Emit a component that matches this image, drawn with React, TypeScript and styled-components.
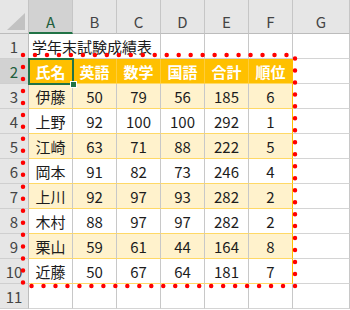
import React from 'react';
import styled, { createGlobalStyle } from 'styled-components';

const GlobalStyle = createGlobalStyle`
  html, body {
    margin: 0;
    padding: 0;
    background: #ffffff;
    overflow: hidden;
  }
  body {
    font-family: "Noto Sans CJK JP", "Noto Sans", sans-serif;
  }
`;

type Tone = 'head' | 'odd' | 'even' | 'plain';

const COLS = ['A', 'B', 'C', 'D', 'E', 'F', 'G'];

const header = ['氏名', '英語', '数学', '国語', '合計', '順位'];

const rows: (string | number)[][] = [
  ['伊藤', 50, 79, 56, 185, 6],
  ['上野', 92, 100, 100, 292, 1],
  ['江崎', 63, 71, 88, 222, 5],
  ['岡本', 91, 82, 73, 246, 4],
  ['上川', 92, 97, 93, 282, 2],
  ['木村', 88, 97, 97, 282, 2],
  ['栗山', 59, 61, 44, 164, 8],
  ['近藤', 50, 67, 64, 181, 7],
];

const Wrap = styled.div`
  position: relative;
  width: 350px;
  height: 310px;
  overflow: hidden;
`;

const Sheet = styled.div`
  display: grid;
  grid-template-columns: 29px repeat(6, 44px) 1fr;
  grid-template-rows: 34px repeat(11, 25px);
  width: 350px;
`;

const Corner = styled.div`
  position: relative;
  background: #e6e6e6;
  border-right: 1px solid #c4c4c4;
  border-bottom: 1px solid #bcbcbc;
  box-sizing: border-box;
  &::after {
    content: '';
    position: absolute;
    right: 3px;
    bottom: 3px;
    width: 18px;
    height: 17px;
    background: #c2c2c2;
    clip-path: polygon(100% 0, 100% 100%, 0 100%);
  }
`;

const ColHeader = styled.div<{ $selected?: boolean }>`
  box-sizing: border-box;
  display: flex;
  align-items: center;
  justify-content: center;
  padding-top: 10px;
  background: ${p => (p.$selected ? '#d2d2d2' : '#e6e6e6')};
  border-right: 1px solid #c6c6c6;
  border-bottom: ${p => (p.$selected ? '2px solid #217346' : '1px solid #bcbcbc')};
  color: ${p => (p.$selected ? '#1f5e3c' : '#444444')};
  font-size: 15px;
  line-height: 1;
`;

const RowHeader = styled.div<{ $selected?: boolean }>`
  box-sizing: border-box;
  display: flex;
  align-items: center;
  justify-content: center;
  background: ${p => (p.$selected ? '#d2d2d2' : '#e6e6e6')};
  border-right: 1px solid #bdbdbd;
  border-bottom: 1px solid #cfcfcf;
  color: ${p => (p.$selected ? '#1f5e3c' : '#444444')};
  font-size: 15px;
  line-height: 1;
`;

const toneBg: Record<Tone, string> = {
  head: '#ffc000',
  odd: '#fff2cc',
  even: '#ffffff',
  plain: '#ffffff',
};

const Cell = styled.div<{ $tone: Tone; $last?: boolean; $span?: number }>`
  box-sizing: border-box;
  display: flex;
  align-items: center;
  justify-content: ${p => (p.$tone === 'plain' ? 'flex-start' : 'center')};
  grid-column: ${p => (p.$span ? `span ${p.$span}` : 'auto')};
  background: ${p => toneBg[p.$tone]};
  border-right: 1px solid
    ${p => (p.$last ? '#ffc000' : p.$tone === 'head' ? '#ffcd3a' : '#c8c8c8')};
  border-bottom: 1px solid ${p => (p.$tone === 'plain' ? '#d4d4d4' : '#ffd966')};
  color: ${p => (p.$tone === 'head' ? '#ffffff' : '#1c1c1c')};
  font-weight: ${p => (p.$tone === 'head' ? 700 : 400)};
  font-size: 15px;
  line-height: 1;
  padding-left: ${p => (p.$tone === 'plain' ? '3px' : '0')};
  white-space: nowrap;
`;

const Selection = styled.div`
  position: absolute;
  left: 28px;
  top: 58px;
  width: 46px;
  height: 27px;
  box-sizing: border-box;
  border: 2px solid #217346;
  pointer-events: none;
`;

const FillHandle = styled.div`
  position: absolute;
  left: 70px;
  top: 81px;
  width: 7px;
  height: 7px;
  box-sizing: border-box;
  background: #217346;
  border: 1px solid #ffffff;
`;

const Ants = styled.svg`
  position: absolute;
  left: 0;
  top: 0;
  pointer-events: none;
`;

const App = () => {
  const perimeter = 2 * (272 + 231);
  const step = perimeter / 84;

  return (
    <>
      <GlobalStyle />
      <Wrap>
        <Sheet>
          <Corner />
          {COLS.map(c => (
            <ColHeader key={c} $selected={c === 'A'}>{c}</ColHeader>
          ))}

          <RowHeader>1</RowHeader>
          <Cell $tone="plain" $span={3}>学年末試験成績表</Cell>
          {[0, 1, 2, 3].map(i => <Cell key={i} $tone="plain" />)}

          <RowHeader $selected>2</RowHeader>
          {header.map((h, i) => (
            <Cell key={h} $tone="head" $last={i === 5}>{h}</Cell>
          ))}
          <Cell $tone="plain" />

          {rows.map((r, ri) => (
            <React.Fragment key={ri}>
              <RowHeader>{ri + 3}</RowHeader>
              {r.map((v, ci) => (
                <Cell key={ci} $tone={ri % 2 === 0 ? 'odd' : 'even'} $last={ci === 5}>
                  {v}
                </Cell>
              ))}
              <Cell $tone="plain" />
            </React.Fragment>
          ))}

          <RowHeader>11</RowHeader>
          {[0, 1, 2, 3, 4, 5, 6].map(i => <Cell key={i} $tone="plain" />)}
        </Sheet>

        <Selection />
        <FillHandle />

        <Ants width="350" height="310" viewBox="0 0 350 310">
          <rect
            x="23"
            y="55"
            width="272"
            height="231"
            fill="none"
            stroke="#ff0000"
            strokeWidth="4.5"
            strokeLinecap="round"
            strokeDasharray={`0 ${step}`}
          />
        </Ants>
      </Wrap>
    </>
  );
};

export default App;
